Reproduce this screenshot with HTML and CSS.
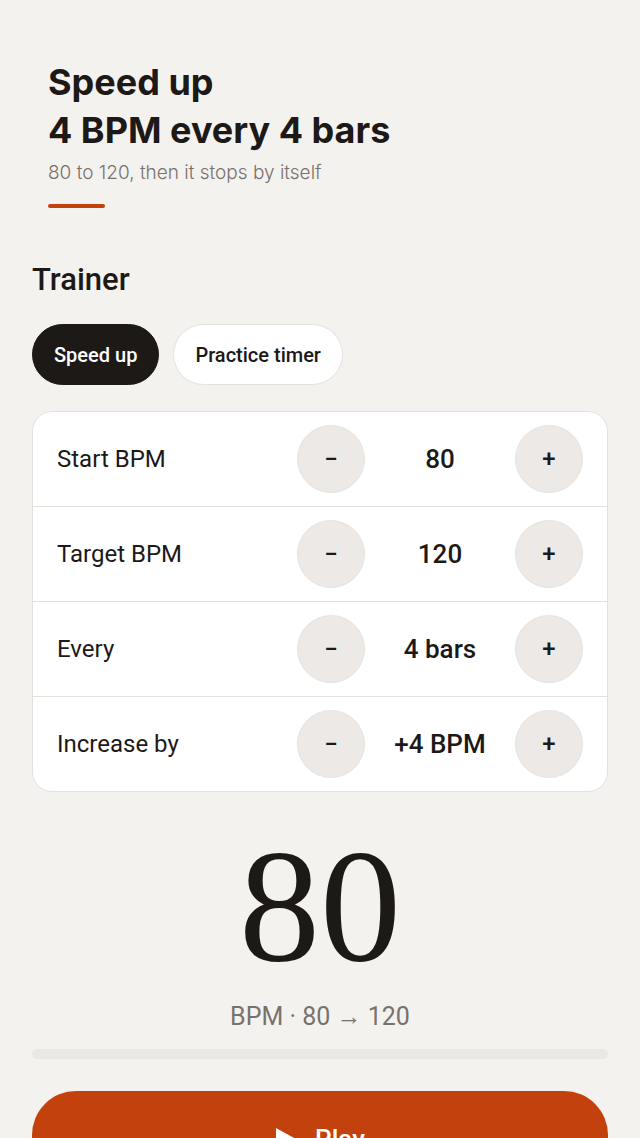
FILE: index.html
```html
<!DOCTYPE html>
<html lang="en">
<head>
    <meta charset="UTF-8">
    <title>Metronome Trainer</title>
    <link rel="stylesheet" href="styles.css">
</head>
<body>
    <header class="summary">
        <h1>Speed up<br>4 BPM every 4 bars</h1>
        <p class="summary-sub">80 to 120, then it stops by itself</p>
        <div class="summary-mark"></div>
    </header>

    <main class="trainer">
        <h2>Trainer</h2>

        <div class="tabs">
            <button class="tab active">Speed up</button>
            <button class="tab">Practice timer</button>
        </div>

        <div class="card">
            <div class="row">
                <span class="row-label">Start BPM</span>
                <button class="step">&minus;</button>
                <span class="row-value">80</span>
                <button class="step">+</button>
            </div>
            <div class="row">
                <span class="row-label">Target BPM</span>
                <button class="step">&minus;</button>
                <span class="row-value">120</span>
                <button class="step">+</button>
            </div>
            <div class="row">
                <span class="row-label">Every</span>
                <button class="step">&minus;</button>
                <span class="row-value">4 bars</span>
                <button class="step">+</button>
            </div>
            <div class="row">
                <span class="row-label">Increase by</span>
                <button class="step">&minus;</button>
                <span class="row-value">+4 BPM</span>
                <button class="step">+</button>
            </div>
        </div>

        <div class="tempo">80</div>
        <div class="tempo-range">BPM &middot; 80 &rarr; 120</div>

        <div class="progress"><div class="progress-fill" style="width: 0%"></div></div>

        <button class="play">
            <svg width="22" height="24" viewBox="0 0 22 24"><path d="M1 1 L21 12 L1 23 Z" fill="#fff"/></svg>
            Play
        </button>
    </main>
</body>
</html>
```

FILE: styles.css
```css
:root {
    --bg: #f4f2ef;
    --ink: #1c1917;
    --muted: #78716c;
    --accent: #c2410c;
    --line: #e4e1dd;
    --soft: #ece9e6;
}

* {
    margin: 0;
    padding: 0;
    box-sizing: border-box;
}

body {
    background-color: var(--bg);
    color: var(--ink);
    font-family: 'Roboto', sans-serif;
}

.summary {
    padding: 58px 48px 0;
}

.summary h1 {
    font-family: 'Inter', sans-serif;
    font-weight: 700;
    font-size: 36px;
    line-height: 48px;
}

.summary-sub {
    font-family: 'Inter', sans-serif;
    font-weight: 300;
    font-size: 19px;
    line-height: 26px;
    color: var(--muted);
    margin-top: 6px;
}

.summary-mark {
    width: 57px;
    height: 4px;
    border-radius: 2px;
    background-color: var(--accent);
    margin-top: 18px;
}

.trainer {
    padding: 54px 32px 0;
}

.trainer h2 {
    font-size: 31px;
    font-weight: 500;
    line-height: 36px;
}

.tabs {
    display: flex;
    gap: 14px;
    margin-top: 26px;
}

.tab {
    height: 61px;
    padding: 0 21px;
    border-radius: 31px;
    border: 1px solid var(--line);
    background-color: white;
    color: var(--ink);
    font-family: 'Roboto', sans-serif;
    font-size: 20px;
    font-weight: 500;
}

.tab.active {
    background-color: var(--ink);
    border-color: var(--ink);
    color: white;
}

.card {
    margin-top: 26px;
    background-color: white;
    border: 1px solid var(--line);
    border-radius: 20px;
}

.row {
    display: flex;
    align-items: center;
    padding: 13px 24px;
    border-top: 1px solid var(--line);
}

.row:first-child {
    border-top: none;
}

.row-label {
    flex: 1;
    font-size: 24px;
}

.row-value {
    width: 150px;
    text-align: center;
    font-size: 26px;
    font-weight: 500;
}

.step {
    width: 68px;
    height: 68px;
    border-radius: 50%;
    border: 1px solid #e6e3df;
    background-color: var(--soft);
    color: var(--ink);
    font-family: 'Roboto', sans-serif;
    font-size: 24px;
    font-weight: 500;
}

.tempo {
    margin-top: 34px;
    text-align: center;
    font-family: 'Liberation Serif', serif;
    font-size: 162px;
    line-height: 160px;
}

.tempo-range {
    margin-top: 17px;
    text-align: center;
    font-size: 25px;
    line-height: 28px;
    color: var(--muted);
}

.progress {
    margin-top: 18px;
    height: 10px;
    border-radius: 5px;
    background-color: #ebe8e4;
    overflow: hidden;
}

.progress-fill {
    height: 100%;
    background-color: var(--accent);
}

.play {
    margin-top: 32px;
    width: 100%;
    height: 96px;
    border: none;
    border-radius: 44px;
    background-color: var(--accent);
    color: white;
    font-family: 'Roboto', sans-serif;
    font-size: 26px;
    font-weight: 500;
    display: flex;
    align-items: center;
    justify-content: center;
    gap: 18px;
}
```
